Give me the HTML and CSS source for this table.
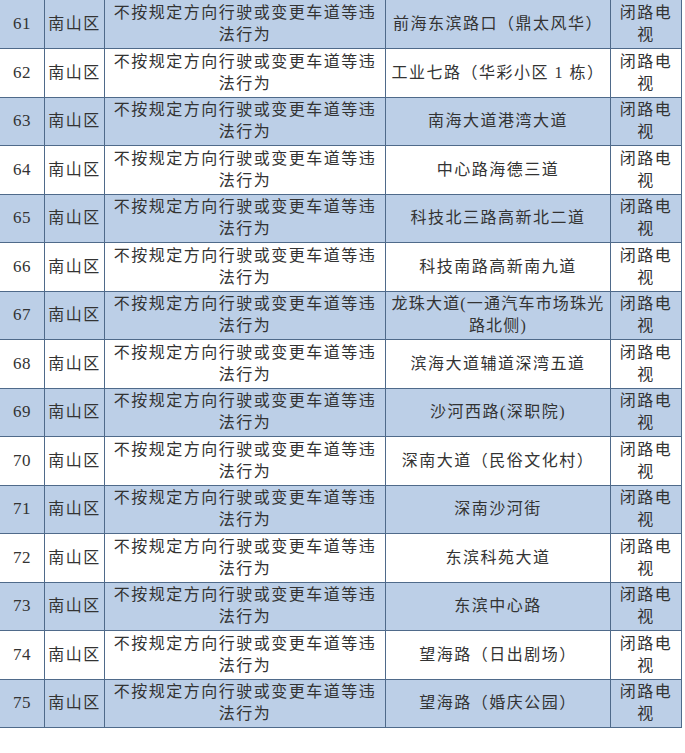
FILE: index.html
```html
<!DOCTYPE html>
<html lang="zh-CN">
<head>
<meta charset="utf-8">
<title>违法抓拍点位</title>
<link rel="stylesheet" href="styles.css">
</head>
<body>
<table class="grid">
  <colgroup>
    <col class="c-no"><col class="c-area"><col class="c-act"><col class="c-loc"><col class="c-dev">
  </colgroup>
  <tbody>
    <tr class="shade"><td class="no">61</td><td class="area">南山区</td><td class="act">不按规定方向行驶或变更车道等违法行为</td><td class="loc">前海东滨路口（鼎太风华）</td><td class="dev">闭路电视</td></tr>
    <tr><td class="no">62</td><td class="area">南山区</td><td class="act">不按规定方向行驶或变更车道等违法行为</td><td class="loc">工业七路（华彩小区 1 栋）</td><td class="dev">闭路电视</td></tr>
    <tr class="shade"><td class="no">63</td><td class="area">南山区</td><td class="act">不按规定方向行驶或变更车道等违法行为</td><td class="loc">南海大道港湾大道</td><td class="dev">闭路电视</td></tr>
    <tr><td class="no">64</td><td class="area">南山区</td><td class="act">不按规定方向行驶或变更车道等违法行为</td><td class="loc">中心路海德三道</td><td class="dev">闭路电视</td></tr>
    <tr class="shade"><td class="no">65</td><td class="area">南山区</td><td class="act">不按规定方向行驶或变更车道等违法行为</td><td class="loc">科技北三路高新北二道</td><td class="dev">闭路电视</td></tr>
    <tr><td class="no">66</td><td class="area">南山区</td><td class="act">不按规定方向行驶或变更车道等违法行为</td><td class="loc">科技南路高新南九道</td><td class="dev">闭路电视</td></tr>
    <tr class="shade"><td class="no">67</td><td class="area">南山区</td><td class="act">不按规定方向行驶或变更车道等违法行为</td><td class="loc tight">龙珠大道(一通汽车市场珠光路北侧)</td><td class="dev">闭路电视</td></tr>
    <tr><td class="no">68</td><td class="area">南山区</td><td class="act">不按规定方向行驶或变更车道等违法行为</td><td class="loc">滨海大道辅道深湾五道</td><td class="dev">闭路电视</td></tr>
    <tr class="shade"><td class="no">69</td><td class="area">南山区</td><td class="act">不按规定方向行驶或变更车道等违法行为</td><td class="loc">沙河西路(深职院)</td><td class="dev">闭路电视</td></tr>
    <tr><td class="no">70</td><td class="area">南山区</td><td class="act">不按规定方向行驶或变更车道等违法行为</td><td class="loc">深南大道（民俗文化村）</td><td class="dev">闭路电视</td></tr>
    <tr class="shade"><td class="no">71</td><td class="area">南山区</td><td class="act">不按规定方向行驶或变更车道等违法行为</td><td class="loc">深南沙河街</td><td class="dev">闭路电视</td></tr>
    <tr><td class="no">72</td><td class="area">南山区</td><td class="act">不按规定方向行驶或变更车道等违法行为</td><td class="loc">东滨科苑大道</td><td class="dev">闭路电视</td></tr>
    <tr class="shade"><td class="no">73</td><td class="area">南山区</td><td class="act">不按规定方向行驶或变更车道等违法行为</td><td class="loc">东滨中心路</td><td class="dev">闭路电视</td></tr>
    <tr><td class="no">74</td><td class="area">南山区</td><td class="act">不按规定方向行驶或变更车道等违法行为</td><td class="loc">望海路（日出剧场）</td><td class="dev">闭路电视</td></tr>
    <tr class="shade"><td class="no">75</td><td class="area">南山区</td><td class="act">不按规定方向行驶或变更车道等违法行为</td><td class="loc">望海路（婚庆公园）</td><td class="dev">闭路电视</td></tr>
  </tbody>
</table>
</body>
</html>
```

FILE: styles.css
```css
html, body {
  margin: 0;
  padding: 0;
  background: #ffffff;
}

.grid {
  border-collapse: separate;
  border-spacing: 0;
  table-layout: fixed;
  width: 682px;
  font-family: "Liberation Serif", "Noto Sans CJK SC", serif;
  font-size: 16px;
  letter-spacing: 1.5px;
  line-height: 22px;
  color: #333333;
}

.c-no { width: 45px; }
.c-area { width: 60px; }
.c-act { width: 281px; }
.c-loc { width: 225px; }
.c-dev { width: 71px; }

.grid td {
  border-right: 1px solid #4f6a8a;
  border-bottom: 1px solid #4f6a8a;
  height: 48.5px;
  padding: 0 5px;
  text-align: center;
  vertical-align: middle;
  box-sizing: border-box;
  word-break: break-all;
}

.grid tr:first-child td {
  height: 49px;
}

.grid tr.shade td {
  background: #bccfe7;
}

.grid td.no {
  padding: 0 2px;
  font-size: 17px;
  letter-spacing: 0.5px;
}

.grid td.area {
  padding: 0 2px;
}

.grid td.loc {
  padding: 0 3px;
}

.grid td.tight {
  letter-spacing: 1.2px;
}
```
